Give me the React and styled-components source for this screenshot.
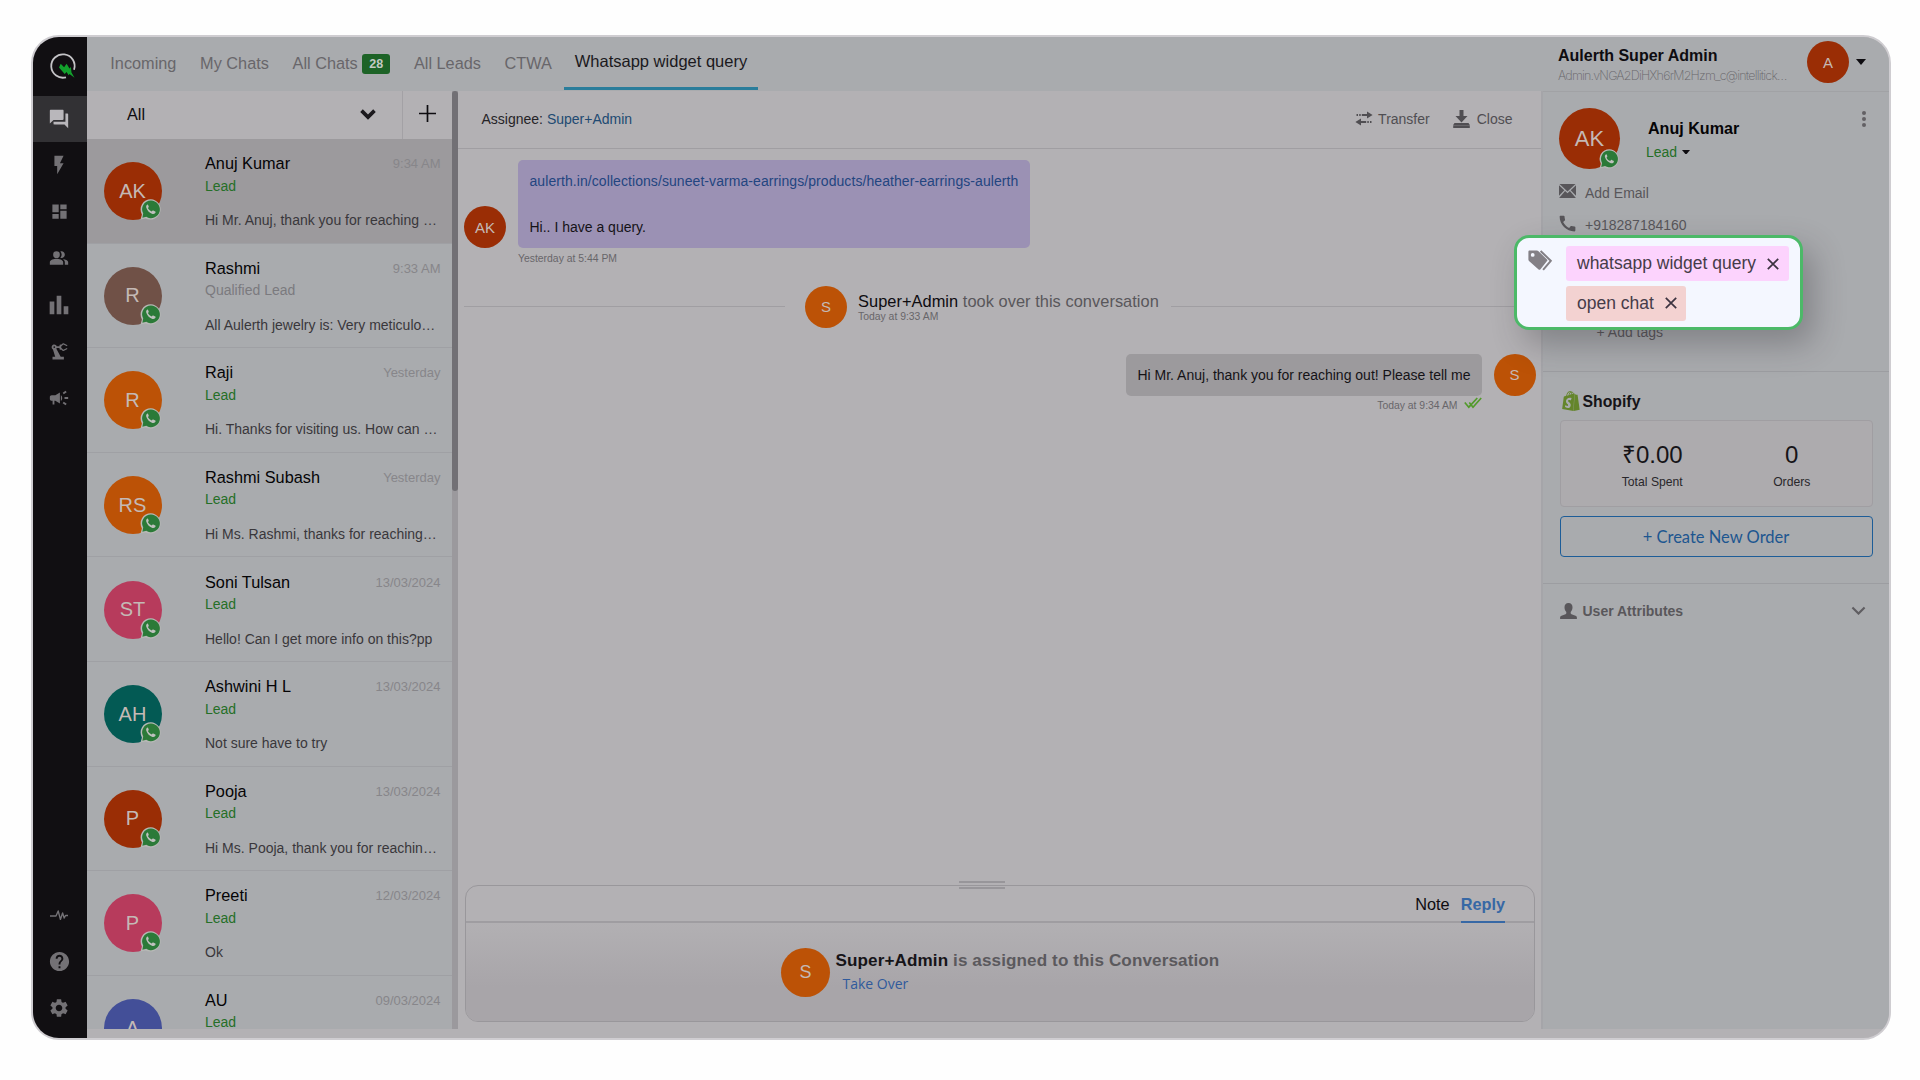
import React from "react";
import styled, { createGlobalStyle } from "styled-components";
import {
    MdForum,
    MdFlashOn,
    MdDashboard,
    MdPeopleAlt,
    MdBarChart,
    MdPrecisionManufacturing,
    MdCampaign,
    MdHelp,
    MdSettings,
    MdCall,
} from "react-icons/md";
import { SiShopify } from "react-icons/si";

const colors = {
    panel: "#a9abae",
    surface: "#b3b1b4",
    line: "#9f9da1",
    ink: "#0e0c10",
    text: "#39373b",
    muted: "#68666a",
    faint: "#87868a",
    green: "#256f27",
    rust: "#9a2d05",
    orange: "#bc5206",
    initials: "#c4b9b5",
};

const chats = [
    { name: "Anuj Kumar", initials: "AK", color: colors.rust, time: "9:34 AM", status: "Lead", preview: "Hi Mr. Anuj, thank you for reaching …", active: true },
    { name: "Rashmi", initials: "R", color: "#705147", time: "9:33 AM", status: "Qualified Lead", preview: "All Aulerth jewelry is: Very meticulo…" },
    { name: "Raji", initials: "R", color: colors.orange, time: "Yesterday", status: "Lead", preview: "Hi. Thanks for visiting us. How can …" },
    { name: "Rashmi Subash", initials: "RS", color: colors.orange, time: "Yesterday", status: "Lead", preview: "Hi Ms. Rashmi, thanks for reaching…" },
    { name: "Soni Tulsan", initials: "ST", color: "#b73b5c", time: "13/03/2024", status: "Lead", preview: "Hello! Can I get more info on this?pp" },
    { name: "Ashwini H L", initials: "AH", color: "#035a54", time: "13/03/2024", status: "Lead", preview: "Not sure have to try" },
    { name: "Pooja", initials: "P", color: colors.rust, time: "13/03/2024", status: "Lead", preview: "Hi Ms. Pooja, thank you for reachin…" },
    { name: "Preeti", initials: "P", color: "#b73b5c", time: "12/03/2024", status: "Lead", preview: "Ok" },
    { name: "AU", initials: "A", color: "#434f98", time: "09/03/2024", status: "Lead", preview: "" },
];

const Logo = () => (
    <svg width="28" height="28" viewBox="0 0 28 28" fill="none">
        <path d="M17 25.3A11.7 11.7 0 1 1 25 17.800" stroke="#c4c3c6" strokeWidth="1.8" />
        <path d="M10 15.6l1.700-3.800 3.400 3.400 2.500-3.400 2.900 4.800 1.400-1.600 .6 5.600 3 5.200-5-3.900-.9 1.400-2-3.200-1.900 2z" fill="#12a02c" />
    </svg>
);

const Pulse = () => (
    <svg width="18" height="12" viewBox="0 0 18 12" fill="none" stroke="currentColor" strokeWidth="1.4" strokeLinejoin="round">
        <path d="M0 7h6l2.2-5 2.2 8.4L12.6 4l1.6 5L15.6 6.5H18" />
    </svg>
);

const WhatsappIcon = ({ size = 21 }) => (
    <svg width={size} height={size} viewBox="0 0 21 21">
        <path d="M10.8.2A10.2 10.2 0 0 0 1.9 15.4L.6 20.6l5-1.2A10.2 10.2 0 1 0 10.8.2z" fill="#b7b9b6" />
        <path d="M10.8 1.6a8.7 8.7 0 0 0-7.6 13L2.4 18.8l3.9-1A8.8 8.8 0 1 0 10.8 1.6z" fill="#2b7a38" />
        <path d="M7.6 5.6c-1.3.6-1.7 1.7-1.3 3.1.9 3 3.4 5.4 6.2 6.2 1.5.4 2.7-.3 3.1-1.6.1-.5 0-.7-.4-.9l-1.9-.9c-.4-.2-.7-.1-.9.2l-.7.9c-1.8-.7-3.1-2-3.8-3.5l.7-.9c.2-.3.2-.5.1-.8l-.7-1.6c-.1-.2-.2-.3-.4-.2z" fill="#bfc1be" />
    </svg>
);

const TransferIcon = () => (
    <svg width="18" height="15" viewBox="0 0 18 15" fill="currentColor">
        <path d="M1.5 3h1.5v2H1.5zM4.2 3h1.5v2H4.2zM6.8 3h5.2V.4L17.6 4 12 7.6V5H6.8zM16.5 10H15v2h1.5zM13.8 10h-1.5v2h1.5zM11.2 10H6V7.5L.4 11 6 14.6V12h5.2z" />
    </svg>
);

const CloseChatIcon = () => (
    <svg width="17" height="18" viewBox="0 0 17 18" fill="currentColor">
        <path d="M6.5 0h4v6h4l-6 6.4L2.5 6h4zM1.5 13h14l1.3 2H.2zM.2 15.3h16.6V18H.2z" />
    </svg>
);

const MailIcon = () => (
    <svg width="17" height="14" viewBox="0 0 17 14" fill="currentColor">
        <path d="M.5 0h16L8.5 7.4zM0 1.2l5.3 5L0 11.8zM17 1.2l-5.3 5 5.3 5.6zM6.1 7L8.5 9.2 10.9 7l6 7H.1z" />
    </svg>
);

const UserIcon = () => (
    <svg width="17" height="16" viewBox="0 0 17 16" fill="currentColor">
        <path d="M8.5 0c2.6 0 4 1.7 4 4.3 0 1.9-.7 3.6-1.8 4.7v1.2c0 .5.3.8.8 1l4 1.5c.9.4 1.4 1 1.4 2V16H.1v-1.3c0-1 .5-1.6 1.4-2l4-1.5c.5-.2.8-.5.8-1V9C5.2 7.9 4.5 6.2 4.5 4.3 4.5 1.7 5.9 0 8.5 0z" />
    </svg>
);

const TagsIcon = () => (
    <svg width="25" height="21" viewBox="0 0 25 21" fill="#838086">
        <path fillRule="evenodd" d="M1.6.5h7.2c.7 0 1.2.2 1.7.7l8.5 8.3c.5.5.5 1.100 0 1.600l-6.700 8.300c-.5.6-1.200.6-1.700.1L1 10.900C.6 10.500.4 10 .4 9.400V1.700c0-.7.500-1.200 1.200-1.200zM4.700 3a1.900 1.900 0 1 0 0 3.800 1.900 1.900 0 0 0 0-3.800z" />
        <path d="M12.6 1l10.2 9.8-7.7 9" fill="none" stroke="#838086" strokeWidth="2" />
    </svg>
);

const Cross = () => (
    <svg width="12" height="12" viewBox="0 0 12 12" stroke="#3c3340" strokeWidth="1.7">
        <path d="M.8.8l10.4 10.4M11.2.8L.8 11.2" />
    </svg>
);

const DoubleCheck = () => (
    <svg width="18" height="12" viewBox="0 0 18 12" fill="none" stroke="#529a2b" strokeWidth="1.7">
        <path d="M.8 5.5l4 4.7L13.3 1M5.3 5.5l3.7 4.7L17.2 1" />
    </svg>
);

const Caret = ({ size = 10 }) => (
    <svg width={size} height={size * 0.6} viewBox="0 0 10 6" fill={colors.ink}>
        <path d="M0 0h10L5 6z" />
    </svg>
);

const Chevron = ({ width, stroke, color }) => (
    <svg width={width} height={width * 0.64} viewBox="0 0 14 9" fill="none" stroke={color} strokeWidth={stroke}>
        <path d="M1.3 1.4L7 7.1l5.7-5.7" />
    </svg>
);

export default function App() {
    return (
        <>
            <GlobalStyle />
            <Frame>
                <Sidebar />
                <Workspace>
                    <TopBar />
                    <Columns>
                        <ChatList />
                        <Conversation />
                        <Profile />
                    </Columns>
                </Workspace>
            </Frame>
        </>
    );
}

const Sidebar = () => (
    <Nav>
        <NavLogo><Logo /></NavLogo>
        <NavItem $active><MdForum size={22} /></NavItem>
        <NavItem><MdFlashOn size={22} /></NavItem>
        <NavItem><MdDashboard size={19} /></NavItem>
        <NavItem><MdPeopleAlt size={20} /></NavItem>
        <NavItem><MdBarChart size={28} /></NavItem>
        <NavItem><MdPrecisionManufacturing size={21} /></NavItem>
        <NavItem><MdCampaign size={22} /></NavItem>
        <NavBottom>
            <NavItem><Pulse /></NavItem>
            <NavItem><MdHelp size={23} /></NavItem>
            <NavItem><MdSettings size={22} /></NavItem>
        </NavBottom>
    </Nav>
);

const TopBar = () => (
    <Header>
        <Tabs>
            <Tab>Incoming</Tab>
            <Tab>My Chats</Tab>
            <Tab>All Chats<Count>28</Count></Tab>
            <Tab>All Leads</Tab>
            <Tab>CTWA</Tab>
            <Tab $active>Whatsapp widget query</Tab>
        </Tabs>
        <Account>
            <AccountText>
                <AccountName>Aulerth Super Admin</AccountName>
                <AccountMail>Admin.vNGA2DiHXh6rM2Hzm_c@intellitick…</AccountMail>
            </AccountText>
            <Avatar $size={42} $font={15} $color={colors.rust}>A</Avatar>
            <Caret size={10} />
        </Account>
    </Header>
);

const ChatList = () => (
    <ListColumn>
        <ListBody>
            <Filter>
                <FilterSelect>
                    All
                    <Chevron width={16} stroke={3.2} color="#1c1a1e" />
                </FilterSelect>
                <FilterAdd>
                    <svg width="17" height="17" viewBox="0 0 17 17" stroke={colors.ink} strokeWidth="1.7">
                        <path d="M8.5 0v17M0 8.5h17" />
                    </svg>
                </FilterAdd>
            </Filter>
            <Rows>
                {chats.map((chat) => (
                    <Row key={chat.name} $active={chat.active}>
                        <Avatar $size={58} $font={20} $color={chat.color}>
                            {chat.initials}
                            <Channel $right={1}><WhatsappIcon /></Channel>
                        </Avatar>
                        <RowText>
                            <RowTop>
                                <RowName>{chat.name}</RowName>
                                <RowTime>{chat.time}</RowTime>
                            </RowTop>
                            <Status $dim={chat.status !== "Lead"}>{chat.status}</Status>
                            <Preview>{chat.preview}</Preview>
                        </RowText>
                    </Row>
                ))}
            </Rows>
        </ListBody>
        <Scrollbar><Thumb /></Scrollbar>
    </ListColumn>
);

const Conversation = () => (
    <Main>
        <MainHeader>
            <Assignee>Assignee: <span>Super+Admin</span></Assignee>
            <Action><TransferIcon />Transfer</Action>
            <Action $wide><CloseChatIcon />Close</Action>
        </MainHeader>
        <Thread>
            <Incoming>
                <Avatar $size={42} $font={15} $color={colors.rust}>AK</Avatar>
                <div>
                    <Bubble>
                        <a>aulerth.in/collections/suneet-varma-earrings/products/heather-earrings-aulerth</a>
                        <p>Hi.. I have a query.</p>
                    </Bubble>
                    <Stamp>Yesterday at 5:44 PM</Stamp>
                </div>
            </Incoming>
            <Takeover>
                <Rule $side="left" />
                <Avatar $size={42} $font={15} $color={colors.orange}>S</Avatar>
                <TakeoverText>
                    <div><strong>Super+Admin</strong> took over this conversation</div>
                    <Stamp $tight>Today at 9:33 AM</Stamp>
                </TakeoverText>
                <Rule $side="right" />
            </Takeover>
            <Outgoing>
                <div>
                    <Bubble $own>Hi Mr. Anuj, thank you for reaching out! Please tell me</Bubble>
                    <Stamp $own>Today at 9:34 AM <DoubleCheck /></Stamp>
                </div>
                <Avatar $size={42} $font={15} $color={colors.orange}>S</Avatar>
            </Outgoing>
        </Thread>
        <Composer>
            <Handle />
            <ComposerTabs>
                <ComposerTab>Note</ComposerTab>
                <ComposerTab $active>Reply</ComposerTab>
            </ComposerTabs>
            <ComposerBody>
                <Avatar $size={49} $font={18} $color={colors.orange}>S</Avatar>
                <div>
                    <Assigned><strong>Super+Admin</strong> is assigned to this Conversation</Assigned>
                    <TakeOver>Take Over</TakeOver>
                </div>
            </ComposerBody>
        </Composer>
    </Main>
);

const Profile = () => (
    <Aside>
        <Contact>
            <ContactTop>
                <Avatar $size={61} $font={22} $color={colors.rust}>
                    AK
                    <Channel $right={1}><WhatsappIcon size={20} /></Channel>
                </Avatar>
                <ContactText>
                    <ContactName>Anuj Kumar</ContactName>
                    <ContactStatus>Lead <Caret size={8} /></ContactStatus>
                </ContactText>
                <Dots><i /><i /><i /></Dots>
            </ContactTop>
            <Field><MailIcon />Add Email</Field>
            <Field $wideIcon><MdCall size={21} />+918287184160</Field>
            <AddTags>+ Add tags</AddTags>
            <TagCallout>
                <TagsIcon />
                <TagStack>
                    <Tag $color="#fcd3fd">whatsapp widget query<Cross /></Tag>
                    <Tag $color="#f3d2d1">open chat<Cross /></Tag>
                </TagStack>
            </TagCallout>
        </Contact>
        <Shop>
            <ShopTitle><SiShopify size={20} color="#64852b" />Shopify</ShopTitle>
            <Stats>
                <Stat><b>₹0.00</b>Total Spent</Stat>
                <Stat><b>0</b>Orders</Stat>
            </Stats>
            <OrderButton>+ Create New Order</OrderButton>
        </Shop>
        <Attributes>
            <UserIcon />
            <span>User Attributes</span>
            <Chevron width={15} stroke={2} color="#5f5d61" />
        </Attributes>
    </Aside>
);

const GlobalStyle = createGlobalStyle`
    * {
        box-sizing: border-box;
    }

    body {
        margin: 0;
        background: #fefefe;
        font-family: "Liberation Sans", Arial, sans-serif;
        font-size: 14px;
        color: ${colors.text};
        overflow: hidden;
    }

    svg {
        display: block;
        flex: none;
    }
`;

const Frame = styled.div`
    display: flex;
    width: 1860px;
    height: 1005px;
    margin: 35px 0 0 31px;
    border: 2px solid #cfcdd1;
    border-radius: 28px;
    overflow: hidden;
    background: ${colors.surface};
`;

const Nav = styled.nav`
    display: flex;
    flex-direction: column;
    width: 54px;
    background: #110f12;
`;

const NavLogo = styled.div`
    display: flex;
    align-items: center;
    justify-content: center;
    height: 58.5px;
    padding-left: 5px;
`;

const NavItem = styled.div`
    display: flex;
    align-items: center;
    justify-content: center;
    height: 46.5px;
    padding-right: 2px;
    background: ${({ $active }) => ($active ? "#323134" : "transparent")};
    color: ${({ $active }) => ($active ? "#b9b7bb" : "#737175")};
`;

const NavBottom = styled.div`
    margin-top: auto;
    padding-bottom: 7px;
`;

const Workspace = styled.div`
    display: flex;
    flex: 1;
    flex-direction: column;
    min-width: 0;
    padding-bottom: 9px;
`;

const Header = styled.header`
    display: flex;
    justify-content: space-between;
    height: 54px;
    background: ${colors.panel};
`;

const Tabs = styled.div`
    display: flex;
    padding-left: 11.5px;
`;

const Tab = styled.div`
    display: flex;
    align-items: center;
    height: ${({ $active }) => ($active ? 53 : 54)}px;
    padding: ${({ $active }) => ($active ? "0 11px 1px" : "2px 11.85px 0")};
    border-bottom: 3.5px solid ${({ $active }) => ($active ? "#2a7d9b" : "transparent")};
    font-size: ${({ $active }) => ($active ? 16.5 : 16.3)}px;
    color: ${({ $active }) => ($active ? "#1b191d" : colors.muted)};
`;

const Count = styled.span`
    display: flex;
    align-items: center;
    justify-content: center;
    width: 28px;
    height: 20px;
    margin-left: 4.5px;
    border-radius: 3px;
    background: #1d6327;
    font-size: 12.5px;
    font-weight: bold;
    color: #c3c9c3;
`;

const Account = styled.div`
    display: flex;
    align-items: center;
    width: 331px;
    padding-bottom: 4px;
`;

const AccountText = styled.div`
    width: 249px;
    padding-top: 6px;
`;

const AccountName = styled.div`
    font-size: 16px;
    font-weight: bold;
    line-height: 20px;
    color: ${colors.ink};
`;

const AccountMail = styled.div`
    font-family: Inter, "Liberation Sans", sans-serif;
    font-size: 12.5px;
    font-weight: 200;
    line-height: 19px;
    letter-spacing: -0.78px;
    white-space: nowrap;
    color: ${colors.muted};
`;

const Avatar = styled.div`
    position: relative;
    display: flex;
    flex: none;
    align-items: center;
    justify-content: center;
    width: ${({ $size }) => $size}px;
    height: ${({ $size }) => $size}px;
    border-radius: 50%;
    background: ${({ $color }) => $color};
    font-size: ${({ $font }) => $font}px;
    color: ${colors.initials};

    & + svg {
        margin-left: 7px;
    }
`;

const Channel = styled.span`
    position: absolute;
    right: ${({ $right }) => $right}px;
    bottom: 0;
`;

const Columns = styled.div`
    display: flex;
    flex: 1;
    min-height: 0;
`;

const ListColumn = styled.section`
    display: flex;
    width: 371px;
`;

const ListBody = styled.div`
    display: flex;
    flex-direction: column;
    width: 365px;
    background: ${colors.panel};
`;

const Filter = styled.div`
    display: flex;
    flex: none;
    height: 48px;
    background: ${colors.surface};
`;

const FilterSelect = styled.div`
    display: flex;
    flex: 1;
    align-items: center;
    justify-content: space-between;
    padding: 0 26px 1px 40px;
    font-size: 16.3px;
    color: ${colors.ink};
`;

const FilterAdd = styled.div`
    display: flex;
    align-items: center;
    justify-content: center;
    width: 50px;
    padding-bottom: 3px;
    border-left: 1px solid #a3a1a5;
`;

const Rows = styled.div`
    flex: 1;
    min-height: 0;
    overflow: hidden;
`;

const Row = styled.div`
    display: flex;
    align-items: center;
    height: 104.6px;
    padding: 1px 11.5px 0 16.5px;
    border-bottom: 1px solid #9fa0a4;
    background: ${({ $active }) => ($active ? "#9c9a9d" : "transparent")};
`;

const RowText = styled.div`
    flex: 1;
    align-self: stretch;
    padding: 12.7px 0 0 43.5px;
    white-space: nowrap;
`;

const RowTop = styled.div`
    display: flex;
    align-items: center;
    justify-content: space-between;
    height: 22px;
`;

const RowName = styled.div`
    font-size: 16.3px;
    color: #050406;
`;

const RowTime = styled.div`
    font-size: 13px;
    color: ${colors.faint};
`;

const Status = styled.div`
    height: 22px;
    line-height: 22px;
    color: ${({ $dim }) => ($dim ? "#7b7a7e" : colors.green)};
`;

const Preview = styled.div`
    margin-top: 12.5px;
    line-height: 22px;
    color: ${colors.text};
`;

const Scrollbar = styled.div`
    width: 6px;
    background: #9b999d;
`;

const Thumb = styled.div`
    height: 400px;
    border-radius: 3px;
    background: #727075;
`;

const Main = styled.main`
    display: flex;
    flex: 1;
    flex-direction: column;
    min-width: 0;
`;

const MainHeader = styled.div`
    display: flex;
    align-items: center;
    height: 58px;
    padding: 0 28.5px 2px 23.5px;
    border-bottom: 1px solid #a09ea2;
`;

const Assignee = styled.div`
    flex: 1;
    color: #252327;

    span {
        color: #214a72;
    }
`;

const Action = styled.div`
    display: flex;
    align-items: center;
    gap: ${({ $wide }) => ($wide ? 7 : 5)}px;
    margin-left: 23px;
    color: #504e52;
`;

const Thread = styled.div`
    flex: 1;
    padding: 11px 5.5px 0 6px;
`;

const Incoming = styled.div`
    display: flex;
    align-items: flex-end;
    gap: 12px;

    > ${Avatar} {
        margin-bottom: 20px;
    }
`;

const Bubble = styled.div`
    padding: ${({ $own }) => ($own ? "0 11px 0 11.5px" : "1px 11.5px 0")};
    border-radius: 5px;
    background: ${({ $own }) => ($own ? "#9c9a9d" : "#9b91b4")};
    line-height: ${({ $own }) => ($own ? 42 : 41)}px;
    white-space: nowrap;
    color: #151317;

    a {
        letter-spacing: 0.072px;
        color: #234580;
    }

    p {
        margin: 5px 0 0;
    }
`;

const Stamp = styled.div`
    display: flex;
    align-items: center;
    justify-content: ${({ $own }) => ($own ? "flex-end" : "flex-start")};
    gap: 6px;
    height: ${({ $tight }) => ($tight ? 12 : 20)}px;
    font-size: 10.4px;
    letter-spacing: 0;
    color: ${colors.muted};

    svg {
        margin-top: -5px;
    }
`;

const Takeover = styled.div`
    display: flex;
    align-items: center;
    margin-top: 17.5px;
`;

const Rule = styled.div`
    flex: ${({ $side }) => ($side === "left" ? "0 0 321px" : "1")};
    height: 1px;
    margin: ${({ $side }) => ($side === "left" ? "0 20px 0 0" : "0 0 0 12px")};
    background: #a09ea2;
`;

const TakeoverText = styled.div`
    margin-left: 11px;
    padding-top: 1px;
    font-size: 16.4px;
    line-height: 19px;
    letter-spacing: 0.04px;
    color: #59575b;

    strong {
        font-weight: normal;
        color: ${colors.ink};
    }
`;

const Outgoing = styled.div`
    display: flex;
    justify-content: flex-end;
    gap: 12px;
    margin-top: 26px;
`;

const Composer = styled.div`
    position: relative;
    height: 137px;
    margin: 0 6px 7px 7px;
    border: 1px solid #99979b;
    border-radius: 13px;
`;

const Handle = styled.div`
    position: absolute;
    top: -5px;
    left: 493px;
    width: 46px;
    height: 8px;
    border: solid #98969a;
    border-width: 2px 0;
`;

const ComposerTabs = styled.div`
    display: flex;
    justify-content: flex-end;
    gap: 11px;
    height: 37px;
    padding-right: 29px;
    border-bottom: 2px solid ${colors.line};
`;

const ComposerTab = styled.div`
    height: 37px;
    border-bottom: ${({ $active }) => ($active ? "2px solid #3768a5" : "none")};
    font-size: 16.3px;
    font-weight: ${({ $active }) => ($active ? "bold" : "normal")};
    line-height: 37px;
    color: ${({ $active }) => ($active ? "#3768a5" : colors.ink)};
`;

const ComposerBody = styled.div`
    display: flex;
    height: 98px;
    padding: 24.5px 0 0 315px;
    border-radius: 0 0 12px 12px;
    background: linear-gradient(#b2b0b3, #a8a5a9 65%);

    > div + div {
        margin-left: 5.5px;
    }
`;

const Assigned = styled.div`
    margin-top: 1.5px;
    font-size: 17.1px;
    font-weight: bold;
    line-height: 23px;
    letter-spacing: 0.1px;
    color: #5b595d;

    strong {
        color: #161418;
    }
`;

const TakeOver = styled.div`
    padding-left: 7px;
    font-family: "Open Sans", "Noto Sans", sans-serif;
    font-size: 14px;
    line-height: 24px;
    color: #305a9c;
`;

const Aside = styled.aside`
    width: 348px;
    border-left: 2px solid #a5a5a9;
    background: ${colors.panel};
`;

const Contact = styled.div`
    position: relative;
    height: 280.5px;
    padding: 16px 23px 0 16px;
    border-top: 1px solid #a1a2a5;
    border-bottom: 1px solid #9c9da1;
`;

const ContactTop = styled.div`
    display: flex;
    height: 66px;
`;

const ContactText = styled.div`
    flex: 1;
    padding: 9px 0 0 26px;
`;

const ContactName = styled.div`
    padding-left: 2px;
    font-size: 16.1px;
    font-weight: bold;
    line-height: 22px;
    color: #050406;
`;

const ContactStatus = styled.div`
    display: flex;
    align-items: center;
    gap: 5px;
    line-height: 26px;
    color: ${colors.green};
`;

const Dots = styled.div`
    display: flex;
    flex-direction: column;
    gap: 2px;
    padding-top: 3px;

    i {
        width: 4px;
        height: 4px;
        border-radius: 50%;
        background: #626064;
    }
`;

const Field = styled.div`
    display: flex;
    align-items: center;
    gap: 9px;
    height: 32px;
    padding-top: 5px;
    color: #58565a;

    svg {
        margin: ${({ $wideIcon }) => ($wideIcon ? "-3px -2px 0" : "-3px 0 0")};
    }
`;

const AddTags = styled.div`
    padding: 86px 0 0 37.5px;
    color: #59575b;
`;

/* highlighted card that sits over the contact details */
const TagCallout = styled.div`
    position: absolute;
    top: 143px;
    left: -29px;
    display: flex;
    gap: 13px;
    width: 289px;
    height: 95px;
    padding: 8px 11px 0 11px;
    border: 3px solid #4cb968;
    border-radius: 15px;
    background: #f4f7ff;
    box-shadow: 10px 14px 32px rgba(40, 38, 44, 0.3);

    > svg {
        margin-top: 4px;
    }
`;

const TagStack = styled.div`
    display: flex;
    flex-direction: column;
    align-items: flex-start;
    gap: 4.5px;
`;

const Tag = styled.div`
    display: flex;
    align-items: center;
    gap: 11px;
    height: 35px;
    padding: 0 9.5px 0 11px;
    border-radius: 3px;
    background: ${({ $color }) => $color};
    font-size: 17.5px;
    white-space: nowrap;
    color: #463c49;
`;

const Shop = styled.div`
    height: 212.5px;
    padding: 19px 16.5px 0 16.5px;
    border-bottom: 1px solid #9c9da1;
`;

const ShopTitle = styled.div`
    display: flex;
    align-items: center;
    gap: 2px;
    height: 22px;
    padding-left: 1px;
    font-size: 15.8px;
    font-weight: bold;
    color: #161418;

    svg {
        margin-top: -2px;
    }
`;

const Stats = styled.div`
    display: flex;
    height: 87px;
    margin-top: 7.5px;
    padding: 0 10px 0 22px;
    border: 1px solid #a09ea2;
    border-radius: 4px;
    background: #adabae;
`;

const Stat = styled.div`
    flex: 1;
    padding-top: 19px;
    font-size: 12.2px;
    text-align: center;
    color: #29272b;

    b {
        display: block;
        margin-bottom: 6px;
        font-size: 24px;
        font-weight: normal;
        line-height: 29px;
        color: #161418;
    }
`;

const OrderButton = styled.button`
    display: block;
    width: 100%;
    height: 41px;
    margin-top: 9px;
    padding: 0;
    border: 1.5px solid #1d5d98;
    border-radius: 4px;
    background: transparent;
    font-family: Lato, sans-serif;
    font-size: 16.5px;
    color: #1d5690;
`;

const Attributes = styled.div`
    display: flex;
    align-items: center;
    gap: 6px;
    height: 53px;
    padding: 0 23px 0 16.5px;
    color: #59575b;

    span {
        flex: 1;
        font-size: 14px;
        font-weight: bold;
    }
`;
